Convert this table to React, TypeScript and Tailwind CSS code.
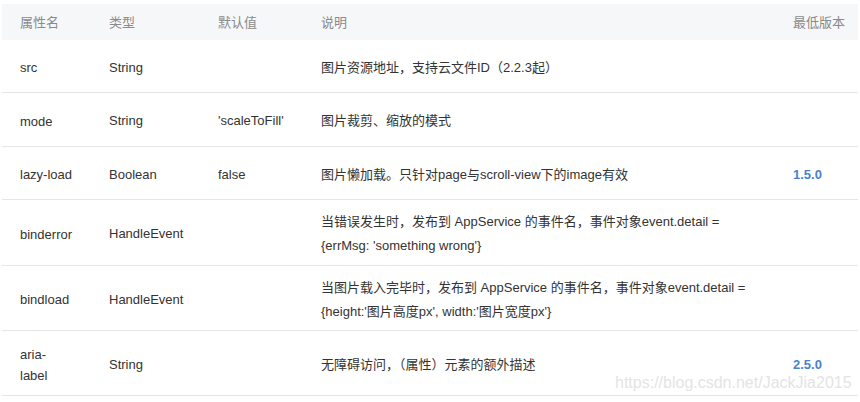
import React from "react";

type Row = {
  name: React.ReactNode;
  type: string;
  def: string;
  desc: React.ReactNode;
  ver: string;
  h: string;
};

const rows: Row[] = [
  { name: "src", type: "String", def: "", desc: "图片资源地址，支持云文件ID（2.2.3起）", ver: "", h: "h-[53px]" },
  { name: "mode", type: "String", def: "'scaleToFill'", desc: "图片裁剪、缩放的模式", ver: "", h: "h-[54px]" },
  { name: "lazy-load", type: "Boolean", def: "false", desc: "图片懒加载。只针对page与scroll-view下的image有效", ver: "1.5.0", h: "h-[53px]" },
  {
    name: "binderror",
    type: "HandleEvent",
    def: "",
    desc: (
      <>
        当错误发生时，发布到 AppService 的事件名，事件对象event.detail =<br />
        {"{errMsg: 'something wrong'}"}
      </>
    ),
    ver: "",
    h: "h-[66px]",
  },
  {
    name: "bindload",
    type: "HandleEvent",
    def: "",
    desc: (
      <>
        当图片载入完毕时，发布到 AppService 的事件名，事件对象event.detail =<br />
        {"{height:'图片高度px', width:'图片宽度px'}"}
      </>
    ),
    ver: "",
    h: "h-[65px]",
  },
  {
    name: (
      <>
        aria-
        <br />
        label
      </>
    ),
    type: "String",
    def: "",
    desc: "无障碍访问，（属性）元素的额外描述",
    ver: "2.5.0",
    h: "h-[65px]",
  },
];

export default function App() {
  return (
    <div
      className="relative w-[860px] h-[402px] bg-white overflow-hidden pt-[4px] pl-[2px]"
      style={{ fontFamily: '"Liberation Sans", Arial, "Noto Sans CJK SC", sans-serif' }}
    >
      <div className="w-[856px] text-[13px] text-[#333]">
        <div className="grid grid-cols-[89px_109px_103px_472px_83px] h-[36px] items-center bg-[#f6f7f9] text-[#8a8a8a] pt-[1px]">
          <div className="pl-[18px]">属性名</div>
          <div className="pl-[18px]">类型</div>
          <div className="pl-[18px]">默认值</div>
          <div className="pl-[18px]">说明</div>
          <div className="pl-[18px]">最低版本</div>
        </div>
        {rows.map((r, i) => (
          <div
            key={i}
            className={`grid grid-cols-[89px_109px_103px_472px_83px] items-center border-b border-[#e6e6e6] pt-[3px] ${r.h}`}
          >
            <div className="pl-[18px] leading-[21px]">{r.name}</div>
            <div className="pl-[18px]">{r.type}</div>
            <div className="pl-[18px]">{r.def}</div>
            <div className="pl-[18px] leading-[24px] whitespace-nowrap">{r.desc}</div>
            <div className="pl-[18px] text-[#4a82cc] font-semibold">{r.ver}</div>
          </div>
        ))}
      </div>
      <div className="absolute left-[615px] top-[373px] text-[16px] leading-[20px] text-[#e4e4e4] whitespace-nowrap">
        https://blog.csdn.net/JackJia2015
      </div>
    </div>
  );
}
